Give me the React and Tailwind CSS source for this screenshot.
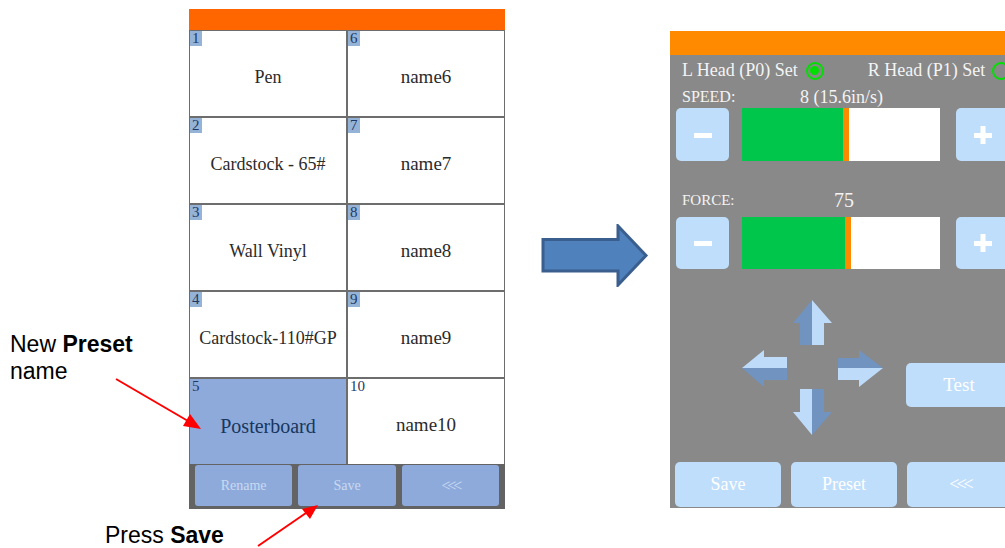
import React from "react";

const dev = "font-['Liberation_Serif','Times_New_Roman',serif]";

const presets = [
  { n: 1, t: "Pen" },
  { n: 6, t: "name6" },
  { n: 2, t: "Cardstock - 65#" },
  { n: 7, t: "name7" },
  { n: 3, t: "Wall Vinyl" },
  { n: 8, t: "name8" },
  { n: 4, t: "Cardstock-110#GP" },
  { n: 9, t: "name9" },
  { n: 5, t: "Posterboard", selected: true },
  { n: 10, t: "name10" },
];

const PresetCell = ({ n, t, selected }) => {
  const badge = n !== 5 && n !== 10;
  const size = selected ? "text-[20px]" : n > 5 ? "text-[19px]" : "text-[18px]";
  return (
    <div
      className={
        "relative h-[85px] flex items-center justify-center pt-[8px] whitespace-nowrap " +
        size +
        (selected ? " bg-[#8eaadb] text-[#17375e]" : " bg-white text-[#2b2b2b]")
      }
    >
      <span
        className={
          "absolute left-0 top-0 px-[2px] text-[15px] leading-[15px] text-[#1f3864] " +
          (badge ? "bg-[#95b3d7]" : "")
        }
      >
        {n}
      </span>
      {t}
    </div>
  );
};

// PowerPoint style block arrow between the two screens
const BigArrow = () => (
  <svg width="108" height="63" viewBox="0 0 108 63" className="mt-[224px] ml-[36px] shrink-0">
    <polygon
      points="2,15.5 77,15.5 77,2 105,31.5 77,61 77,47 2,47"
      fill="#4f81bd"
      stroke="#3a5f8e"
      strokeWidth="3"
    />
  </svg>
);

const PadButton = ({ children }) => (
  <div className="w-[53px] h-full rounded-[5px] bg-[#bfdefb] flex items-center justify-center shrink-0">
    {children}
  </div>
);

const Minus = () => (
  <svg width="20" height="20" viewBox="0 0 20 20">
    <rect x="1" y="8" width="18" height="5" fill="white" />
  </svg>
);

const Plus = () => (
  <svg width="20" height="20" viewBox="0 0 20 20">
    <rect x="1" y="8" width="18" height="5" fill="white" />
    <rect x="7.5" y="1" width="5" height="18" fill="white" />
  </svg>
);

const Slider = ({ fill, h }) => (
  <div className={"flex pl-[6px] " + h}>
    <PadButton>
      <Minus />
    </PadButton>
    <div className="ml-[13px] w-[198px] h-full bg-white flex shrink-0">
      <div className="h-full bg-[#00c74c]" style={{ width: fill }} />
      <div className="h-full w-[6px] bg-[#ff8a00]" />
    </div>
    <div className="ml-[16px] h-full">
      <PadButton>
        <Plus />
      </PadButton>
    </div>
  </div>
);

// jog arrows, each split in a dark and a light half
const JogCross = () => {
  const dark = "#7193bf";
  const light = "#bedcf9";
  return (
    <svg width="141" height="135" viewBox="0 0 141 135" className="ml-[72px] shrink-0">
      {/* up */}
      <polygon points="51,23 70,0 70,45 58,45 58,23" fill={dark} />
      <polygon points="70,0 90,23 82,23 82,45 70,45" fill={light} />
      {/* down */}
      <polygon points="58,89 70,89 70,135 51,112 58,112" fill={light} />
      <polygon points="70,89 82,89 82,112 90,112 70,135" fill={dark} />
      {/* left */}
      <polygon points="0,68 22,50 22,57 45,57 45,68" fill={light} />
      <polygon points="0,68 45,68 45,80 22,80 22,87" fill={dark} />
      {/* right */}
      <polygon points="96,58 117,58 117,50 141,68 96,68" fill={dark} />
      <polygon points="96,68 141,68 117,87 117,80 96,80" fill={light} />
    </svg>
  );
};

const Radio = ({ on }) => (
  <span className="w-[18px] h-[18px] rounded-full border-2 border-[#00e000] flex items-center justify-center shrink-0">
    {on && <span className="w-[9px] h-[9px] rounded-full bg-[#00e000]" />}
  </span>
);

export default function App() {
  return (
    <div className="relative w-[1005px] h-[548px] overflow-hidden bg-white">
      <div className="flex items-start">
        <div className="w-[189px] shrink-0" />

        {/* preset screen */}
        <div className={"mt-[9px] w-[316px] shrink-0 bg-[#6d6d6d] " + dev}>
          <div className="h-[21px] bg-[#ff6600]" />
          <div className="grid grid-cols-2 gap-[2px] px-[1px] pt-[1px]">
            {presets.map((p) => (
              <PresetCell key={p.n} {...p} />
            ))}
          </div>
          <div className="flex gap-[6px] px-[6px] pt-[1px] pb-[3px] bg-[#636363]">
            {["Rename", "Save", "<<<"].map((b) => (
              <div
                key={b}
                className={
                  "w-[98px] h-[41px] rounded-[3px] bg-[#8eaadb] text-[#c9d9f0] flex items-center justify-center " +
                  (b === "<<<" ? "text-[16px] tracking-[-3px]" : "text-[14px]")
                }
              >
                {b}
              </div>
            ))}
          </div>
        </div>

        <BigArrow />

        {/* pen / speed / force screen */}
        <div className={"ml-[21px] mt-[31px] w-[345px] h-[477px] shrink-0 bg-[#898989] text-[#f4f4f4] " + dev}>
          <div className="h-[24px] bg-[#ff8a00]" />
          <div className="h-[31px] flex items-center pl-[12px] text-[18px] whitespace-nowrap">
            <span>L Head (P0) Set</span>
            <span className="ml-[8px]">
              <Radio on />
            </span>
            <span className="ml-[44px]">R Head (P1) Set</span>
            <span className="ml-[7px]">
              <Radio />
            </span>
          </div>
          <div className="h-[22px] flex items-center pl-[12px] whitespace-nowrap">
            <span className="w-[118px] text-[16px]">SPEED:</span>
            <span className="text-[18px]">8 (15.6in/s)</span>
          </div>
          <div className="mt-[0px]">
            <Slider fill="101px" h="h-[53px]" />
          </div>
          <div className="mt-[28px] h-[22px] flex items-center pl-[12px]">
            <span className="w-[152px] text-[15px]">FORCE:</span>
            <span className="text-[20px]">75</span>
          </div>
          <div className="mt-[6px]">
            <Slider fill="103px" h="h-[52px]" />
          </div>
          <div className="mt-[31px] flex items-start">
            <JogCross />
            <div className="ml-[23px] mt-[63px] w-[106px] h-[44px] rounded-[5px] bg-[#bfdefb] text-white text-[19px] flex items-center justify-center shrink-0">
              Test
            </div>
          </div>
          <div className="mt-[27px] flex gap-[10px] pl-[5px]">
            {["Save", "Preset", "<<<"].map((b) => (
              <div
                key={b}
                className={
                  "w-[106px] h-[45px] rounded-[5px] bg-[#bfdefb] text-white flex items-center justify-center shrink-0 " +
                  (b === "<<<" ? "text-[18px] tracking-[-3px]" : "text-[18px]")
                }
              >
                {b}
              </div>
            ))}
          </div>
        </div>
      </div>

      {/* callouts */}
      <div className="absolute left-[10px] top-[331px] text-[23px] leading-[27px] text-black font-['Liberation_Sans',Arial,sans-serif]">
        New <b>Preset</b>
        <br />
        name
      </div>
      <div className="absolute left-[105px] top-[522px] text-[23px] leading-[27px] text-black font-['Liberation_Sans',Arial,sans-serif]">
        Press <b>Save</b>
      </div>
      <svg className="absolute left-0 top-0 pointer-events-none" width="1005" height="548">
        <line x1="116" y1="379" x2="188" y2="421" stroke="#ff0000" strokeWidth="2" />
        <polygon points="201,429 183,426 190,414" fill="#ff0000" />
        <line x1="258" y1="546" x2="306" y2="513" stroke="#ff0000" strokeWidth="2" />
        <polygon points="318,505 310,519 302,509" fill="#ff0000" />
      </svg>
    </div>
  );
}
